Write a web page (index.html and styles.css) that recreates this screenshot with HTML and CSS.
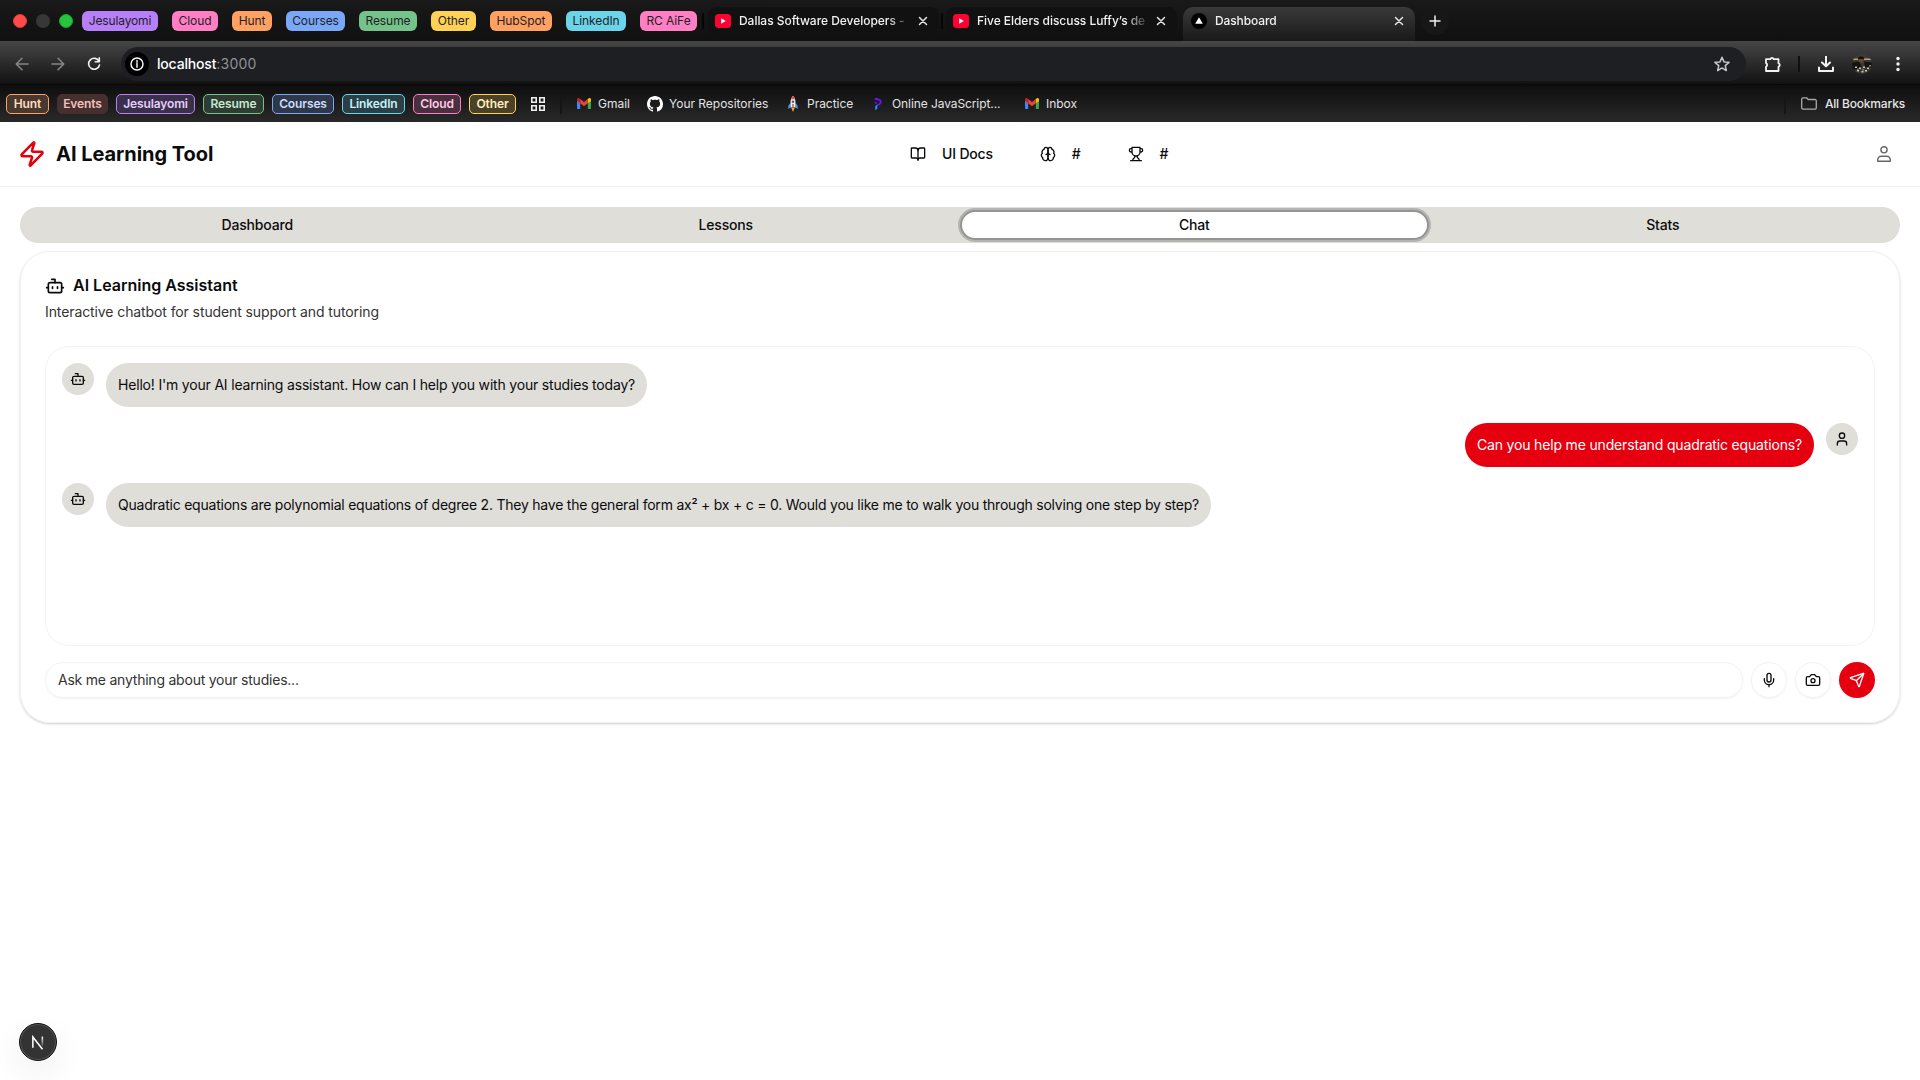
FILE: index.html
```html
<!DOCTYPE html>
<html lang="en">
<head>
<meta charset="utf-8">
<title>Dashboard</title>
<link rel="stylesheet" href="styles.css">
</head>
<body>
<svg class="sprite" aria-hidden="true">
  <symbol id="bot" viewBox="0 0 24 24"><path d="M12 8V4H8"/><rect width="16" height="12" x="4" y="8" rx="2"/><path d="M2 14h2M20 14h2M15 13v2M9 13v2"/></symbol>
  <symbol id="user" viewBox="0 0 24 24"><path d="M19 21v-2a4 4 0 0 0-4-4H9a4 4 0 0 0-4 4v2"/><circle cx="12" cy="7" r="4"/></symbol>
  <symbol id="close" viewBox="0 0 10 10"><path d="M1.500 1.500l7 7M8.500 1.500l-7 7"/></symbol>
  <symbol id="youtube" viewBox="0 0 16 14"><rect width="16" height="14" rx="3.500" fill="#ff0033"/><path d="M6.200 4.300v5.400L10.800 7z" fill="#fff"/></symbol>
  <symbol id="gmail" viewBox="0 0 14 11"><path d="M0 1.500V10a1 1 0 0 0 1 1h2.200V4z" fill="#4285f4"/><path d="M14 1.500V10a1 1 0 0 1-1 1h-2.200V4z" fill="#34a853"/><path d="M10.800 1.300v4L14 2.900V1.500C14 .1 12.500-.4 11.500.5z" fill="#fbbc04"/><path d="M3.200 1.300v4L0 2.900V1.500C0 .1 1.500-.4 2.500.5z" fill="#c5221f"/><path d="M3.200 1.100L7 4l3.800-2.900v4.200L7 8.200 3.200 5.300z" fill="#ea4335"/></symbol>
</svg>

<div class="browser">
  <div class="tabstrip">
    <div class="lights"><i class="light red"></i><i class="light dim"></i><i class="light green"></i></div>
    <div class="groups">
      <span class="group purple jesulayomi">Jesulayomi</span>
      <span class="group pink cloud">Cloud</span>
      <span class="group orange hunt">Hunt</span>
      <span class="group blue courses">Courses</span>
      <span class="group green resume">Resume</span>
      <span class="group yellow other">Other</span>
      <span class="group orange hubspot">HubSpot</span>
      <span class="group cyan linkedin">LinkedIn</span>
      <span class="group pink rcaife">RC AiFe</span>
    </div>
    <i class="tab-sep"></i>
    <div class="tab">
      <svg class="yt"><use href="#youtube"/></svg>
      <span class="tab-title">Dallas Software Developers -</span>
      <svg class="close"><use href="#close"/></svg>
    </div>
    <i class="tab-sep"></i>
    <div class="tab">
      <svg class="yt"><use href="#youtube"/></svg>
      <span class="tab-title">Five Elders discuss Luffy’s de</span>
      <svg class="close"><use href="#close"/></svg>
    </div>
    <div class="tab active">
      <svg class="favicon" viewBox="0 0 16 16"><circle cx="8" cy="8" r="8" fill="#000"/><path d="M8 4.200l3.800 6.600H4.200z" fill="#fff"/></svg>
      <span class="tab-title">Dashboard</span>
      <svg class="close"><use href="#close"/></svg>
    </div>
    <div class="newtab"><svg viewBox="0 0 12 12"><path d="M6 1v10M1 6h10"/></svg></div>
  </div>

  <div class="toolbar">
    <svg class="nav-ic faded" viewBox="0 0 14 14"><path d="M13 7H1.500M7 1.300L1.300 7 7 12.700"/></svg>
    <svg class="nav-ic faded" viewBox="0 0 14 14"><path d="M1 7h11.500M7 1.300L12.700 7 7 12.700"/></svg>
    <svg class="nav-ic" viewBox="0 0 14 14"><path d="M12 4.200A5.500 5.500 0 1 0 12.500 8M12.300.8v4H8.300"/></svg>
    <div class="omnibox">
      <span class="info"><svg viewBox="0 0 14 14"><circle cx="7" cy="7" r="6"/><path d="M7 6.300v4M7 3.500v1.500"/></svg></span>
      <span class="host">localhost</span><span class="port">:3000</span>
      <svg class="star" viewBox="0 0 24 24"><path d="M12 3l2.700 6.200 6.700.6-5.100 4.400 1.500 6.600L12 17.300l-5.800 3.500 1.500-6.600L2.600 9.800l6.700-.6z"/></svg>
    </div>
    <svg class="puzzle" viewBox="0 0 18 18"><path d="M2 4.200h4.400a1.700 1.700 0 0 1 3.300 0h4.800v4.200a1.700 1.700 0 0 1 0 3.300v4.300H2v-4.300a2 2 0 0 0 0-3.600z"/></svg>
    <i class="bar-sep"></i>
    <svg class="download" viewBox="0 0 16 16"><path d="M8 0v10M4 6.500L8 10.300 12 6.500M1 11.500V15h14v-3.500"/></svg>
    <svg class="avatar" viewBox="0 0 20 20"><clipPath id="round"><circle cx="10" cy="10" r="10"/></clipPath><g clip-path="url(#round)"><rect width="20" height="20" fill="#3d3933"/><path d="M0 4.500h6v1.500H0zM12 4.500h8v1.500h-8z" fill="#b3a078"/><path d="M0 8.500l7-1 3 5-5 3H0zM12 7.500l8 1v5h-7z" fill="#151413"/><circle cx="9" cy="6" r="2.600" fill="#6a4331"/><path d="M6 3.800q3-3 6 0v1.200H6z" fill="#17120f"/><path d="M3 12.500h2v1.500H3zM7 13.500h2v1.500H7zM11 12.500h2v1.500h-2zM15 13.500h2v1.500h-2zM5 16h2v1.500H5zM9.500 17h2v1.500h-2zM13 16h2v1.500h-2z" fill="#c2c2bd"/><path d="M5 14.500h1.500v1.500H5zM10 15h2v1.500h-2zM17 11h2v1.500h-2z" fill="#887d6b"/></g></svg>
    <svg class="dots" viewBox="0 0 4 16"><circle cx="2" cy="2.500" r="1.700"/><circle cx="2" cy="8" r="1.700"/><circle cx="2" cy="13.500" r="1.700"/></svg>
  </div>

  <div class="bookmarks">
    <div class="saved-groups">
      <span class="saved s-orange b-hunt">Hunt</span>
      <span class="saved s-red b-events">Events</span>
      <span class="saved s-purple b-jesulayomi">Jesulayomi</span>
      <span class="saved s-green b-resume">Resume</span>
      <span class="saved s-blue b-courses">Courses</span>
      <span class="saved s-cyan b-linkedin">LinkedIn</span>
      <span class="saved s-pink b-cloud">Cloud</span>
      <span class="saved s-yellow b-other">Other</span>
    </div>
    <svg class="grid-ic" viewBox="0 0 14 14"><path d="M.8.8h4.400v4.400H.8zM8.800.8h4.400v4.400H8.800zM.8 8.800h4.400v4.400H.8zM8.800 8.800h4.400v4.400H8.800z"/></svg>
    <i class="bm-sep"></i>
    <div class="links">
      <span class="link gmail"><svg class="mail"><use href="#gmail"/></svg>Gmail</span>
      <span class="link repos"><svg class="github" viewBox="0 0 16 16"><path d="M8 0C3.580 0 0 3.580 0 8c0 3.540 2.290 6.530 5.470 7.590.4.070.55-.17.55-.38 0-.19-.01-.82-.01-1.490-2.010.37-2.530-.49-2.690-.94-.09-.23-.48-.94-.82-1.130-.28-.15-.68-.52-.01-.53.63-.01 1.080.58 1.230.82.72 1.210 1.870.87 2.330.66.07-.52.28-.87.51-1.070-1.780-.2-3.640-.89-3.640-3.950 0-.87.31-1.590.82-2.150-.08-.2-.36-1.020.08-2.120 0 0 .67-.21 2.200.82.64-.18 1.320-.27 2-.27s1.360.09 2 .27c1.530-1.040 2.200-.82 2.200-.82.44 1.100.16 1.920.08 2.120.51.56.82 1.270.82 2.150 0 3.070-1.870 3.750-3.650 3.950.29.25.54.73.54 1.480 0 1.070-.01 1.930-.01 2.200 0 .21.15.46.55.38A8.010 8.010 0 0 0 16 8c0-4.420-3.580-8-8-8z"/></svg>Your Repositories</span>
      <span class="link practice"><svg class="rocket" viewBox="0 0 10 16"><path d="M2.500 7L.3 9.800V13l2.700-1.800zM7.500 7l2.200 2.800V13L7 11.200z" fill="#3f9be0"/><path d="M5 0C2.800 2 2 5 2.800 11.500h4.400C8 5 7.200 2 5 0z" fill="#eceff1"/><path d="M5 0C4 .9 3.300 2 3 3.200h4C6.700 2 6 .9 5 0z" fill="#e8533f"/><circle cx="5" cy="5.700" r="1.300" fill="#356a99"/><path d="M4.300 8h1.400v3.500H4.300z" fill="#d84437"/><path d="M3.300 12h3.400L5 16z" fill="#ff9d26"/></svg>Practice</span>
      <span class="link online"><svg class="programiz" viewBox="0 0 8 12"><path d="M1.500 1C5 1 7.200 2.600 6.700 4.600 6.200 6.400 4.500 6.900 2.500 7.800" fill="none" stroke="#6a16f5" stroke-width="1.900"/><path d="M.8 3.600l1.900.7v1.700L.8 5.300z" fill="#6a16f5"/><path d="M1.200 8.200l2-1.200V11l-2 1z" fill="#1598ff"/></svg>Online JavaScript...</span>
      <span class="link inbox"><svg class="mail"><use href="#gmail"/></svg>Inbox</span>
    </div>
    <i class="bm-sep"></i>
    <span class="all"><svg viewBox="0 0 16 13"><path d="M.7 2.200A1.400 1.400 0 0 1 2.100.8h3.500l1.600 1.700h6.700a1.400 1.400 0 0 1 1.400 1.400v6.900a1.400 1.400 0 0 1-1.400 1.400H2.100a1.400 1.400 0 0 1-1.400-1.400z"/></svg>All Bookmarks</span>
  </div>
</div>

<header class="header">
  <div class="brand">
    <svg class="zap" viewBox="0 0 24 24"><path d="M4 14a1 1 0 0 1-.78-1.630l9.900-10.200a.5.5 0 0 1 .86.460l-1.920 6.020A1 1 0 0 0 13 10h7a1 1 0 0 1 .78 1.630l-9.900 10.200a.5.5 0 0 1-.86-.460l1.920-6.020A1 1 0 0 0 11 14z"/></svg>
    <h1>AI Learning Tool</h1>
  </div>
  <nav class="nav">
    <a><svg class="icon" viewBox="0 0 24 24"><path d="M12 7v14"/><path d="M3 18a1 1 0 0 1-1-1V4a1 1 0 0 1 1-1h5a4 4 0 0 1 4 4 4 4 0 0 1 4-4h5a1 1 0 0 1 1 1v13a1 1 0 0 1-1 1h-6a3 3 0 0 0-3 3 3 3 0 0 0-3-3z"/></svg><span>UI Docs</span></a>
    <a><svg class="icon" viewBox="0 0 24 24"><path d="M12 5a3 3 0 1 0-5.997.125 4 4 0 0 0-2.526 5.770 4 4 0 0 0 .556 6.588A4 4 0 1 0 12 18Z"/><path d="M12 5a3 3 0 1 1 5.997.125 4 4 0 0 1 2.526 5.770 4 4 0 0 1-.556 6.588A4 4 0 1 1 12 18Z"/><path d="M15 13a4.500 4.500 0 0 1-3-4 4.500 4.500 0 0 1-3 4"/></svg><span>#</span></a>
    <a><svg class="icon" viewBox="0 0 24 24"><path d="M6 9H4.500a2.500 2.500 0 0 1 0-5H6M18 9h1.500a2.500 2.500 0 0 0 0-5H18M4 22h16M10 14.660V17c0 .55-.47.98-.97 1.210C7.850 18.750 7 20.240 7 22M14 14.660V17c0 .55.47.98.97 1.210C16.150 18.750 17 20.240 17 22M18 2H6v7a6 6 0 0 0 12 0V2Z"/></svg><span>#</span></a>
  </nav>
  <svg class="account" viewBox="0 0 14 16"><circle cx="7" cy="3.800" r="3.100"/><path d="M.7 15.300v-1.500A3.600 3.600 0 0 1 4.300 10.200h5.400a3.600 3.600 0 0 1 3.600 3.600v1.500z"/></svg>
</header>

<main class="main">
  <div class="tabs">
    <button>Dashboard</button>
    <button>Lessons</button>
    <button class="selected">Chat</button>
    <button>Stats</button>
  </div>

  <section class="card">
    <h2><svg class="icon"><use href="#bot"/></svg><span>AI Learning Assistant</span></h2>
    <p class="sub">Interactive chatbot for student support and tutoring</p>

    <div class="log">
      <div class="msg"><span class="face"><svg class="icon"><use href="#bot"/></svg></span><p class="bubble">Hello! I'm your AI learning assistant. How can I help you with your studies today?</p></div>
      <div class="msg mine"><p class="bubble">Can you help me understand quadratic equations?</p><span class="face"><svg class="icon"><use href="#user"/></svg></span></div>
      <div class="msg"><span class="face"><svg class="icon"><use href="#bot"/></svg></span><p class="bubble long">Quadratic equations are polynomial equations of degree 2. They have the general form ax² + bx + c = 0. Would you like me to walk you through solving one step by step?</p></div>
    </div>

    <div class="compose">
      <div class="field">Ask me anything about your studies...</div>
      <button class="round"><svg class="icon" viewBox="0 0 24 24"><path d="M12 19v3M19 10v2a7 7 0 0 1-14 0v-2"/><rect x="9" y="2" width="6" height="13" rx="3"/></svg></button>
      <button class="round"><svg class="icon" viewBox="0 0 24 24"><path d="M14.500 4h-5L7 7H4a2 2 0 0 0-2 2v9a2 2 0 0 0 2 2h16a2 2 0 0 0 2-2V9a2 2 0 0 0-2-2h-3z"/><circle cx="12" cy="13" r="3"/></svg></button>
      <button class="round send"><svg class="icon" viewBox="0 0 24 24"><path d="M14.536 21.686a.5.5 0 0 0 .937-.024l6.500-19a.496.496 0 0 0-.635-.635l-19 6.500a.5.5 0 0 0-.024.937l7.930 3.180a2 2 0 0 1 1.112 1.110z"/><path d="m21.854 2.147-10.940 10.939"/></svg></button>
    </div>
  </section>
</main>

<div class="devtools"><svg viewBox="0 0 40 40"><defs><linearGradient id="fade" x1="0" y1="0" x2="0" y2="1"><stop offset="0" stop-color="#fff"/><stop offset="1" stop-color="#fff" stop-opacity=".15"/></linearGradient></defs><path d="M14.300 26.500V14.500L25 28" fill="none" stroke="#fff" stroke-width="1.700"/><rect x="24" y="14" width="1.700" height="10.500" fill="url(#fade)"/></svg></div>
</body>
</html>
```
FILE: styles.css
```css
* { box-sizing: border-box; }
body { margin: 0; height: 1080px; overflow: hidden; background: #fff; color: #0b0b0c; font-family: Inter, "Liberation Sans", sans-serif; font-size: 14px; letter-spacing: -0.19px; }
h1, h2, p { margin: 0; }
svg { display: block; flex: none; fill: none; stroke-linecap: round; stroke-linejoin: round; }
button { padding: 0; border: 0; background: none; color: inherit; font: inherit; letter-spacing: inherit; }
.sprite { position: absolute; width: 0; height: 0; }
.icon { width: 16px; height: 16px; stroke: currentColor; stroke-width: 2; }

/* Browser window */
.browser { height: 122px; font-size: 12px; letter-spacing: -0.08px; color: #e6e6e6; background: #161616; }
.browser i { flex: none; }

.tabstrip { display: flex; align-items: center; height: 41px; padding-left: 13px; background: linear-gradient(#191919, #101010); }
.lights { display: flex; gap: 9px; width: 69px; }
.light { width: 14px; height: 14px; border-radius: 50%; }
.light.red { background: #fe4c4b; border: 1px solid #e5383b; }
.light.dim { background: #373737; }
.light.green { background: #27c440; border: 1px solid #17a82c; }
.groups { display: flex; gap: 14px; }
.group { height: 20px; line-height: 20px; border-radius: 6px; text-align: center; color: #1f1f24; white-space: nowrap; }
.purple { background: #b77ff9; }
.pink { background: #ff7ec4; }
.orange { background: #ffa163; }
.blue { background: #7ba7f7; }
.group.green { background: #75c38a; }
.yellow { background: #ffd155; }
.cyan { background: #6bd4e8; }
.jesulayomi { width: 76px; letter-spacing: -0.15px; }
.cloud { width: 46px; }
.hunt { width: 40px; }
.courses { width: 59px; }
.resume { width: 58px; }
.other { width: 45px; }
.hubspot { width: 62px; }
.linkedin { width: 60px; }
.rcaife { width: 57px; }
.tab-sep { width: 2px; height: 16px; margin: 0 4px 0 5px; background: #060606; border-radius: 1px; }
.tab { display: flex; align-items: center; width: 231px; height: 28px; padding-left: 7px; border-radius: 9px; background: #111; color: #f1f1f1; }
.tab + .tab-sep { margin: 0 3px 0 2px; }
.yt { width: 16px; height: 14px; }
.tab-title { flex: none; width: 169px; margin: 0 10px 0 8px; line-height: 16px; white-space: nowrap; font-weight: 500; letter-spacing: -0.04px; mask-image: linear-gradient(90deg, #000 148px, transparent 173px); }
.close { width: 10px; height: 10px; stroke: #e6e6e6; stroke-width: 1.5; }
.tab.active { align-self: flex-end; width: 232px; height: 34px; margin-left: 6px; padding: 0 0 6px 8px; border-radius: 10px 10px 0 0; background: linear-gradient(#3a3a3a, #191919); }
.favicon { width: 16px; height: 16px; }
.tab.active .tab-title { letter-spacing: -0.12px; }
.newtab { display: grid; place-items: center; width: 28px; height: 28px; margin-left: 6px; border-radius: 50%; background: #171717; }
.newtab svg { width: 12px; height: 12px; stroke: #eee; stroke-width: 1.5; }

.toolbar { display: flex; align-items: center; height: 44px; padding: 2px 20px 0 15px; border-bottom: 1px solid #080808; background: linear-gradient(#464646, #121212); }
.nav-ic { width: 14px; height: 14px; margin-right: 22px; stroke: #f2f2f2; stroke-width: 1.6; }
.faded { stroke: #858585; }
.nav-ic + .omnibox { margin-left: -2px; }
.omnibox { display: flex; align-items: center; width: 1625px; height: 34px; padding: 0 15px 0 4px; border-radius: 17px; background: #1e1f23; font-size: 14px; }
.info { display: grid; place-items: center; width: 24px; height: 24px; border-radius: 50%; background: #000; }
.info svg { width: 14px; height: 14px; stroke: #fff; stroke-width: 1.4; }
.host { margin-left: 8px; color: #fff; font-weight: 500; letter-spacing: -0.18px; }
.port { color: #909194; letter-spacing: 0.25px; }
.star { width: 18px; height: 18px; margin-left: auto; stroke: #c7c7c7; stroke-width: 2; }
.puzzle { width: 18px; height: 18px; margin-left: 18px; stroke: #f2f2f2; stroke-width: 1.8; }
.bar-sep { width: 2px; height: 16px; margin: 0 18px 0 16px; background: #101010; }
.download { width: 16px; height: 16px; stroke: #f2f2f2; stroke-width: 2; }
.avatar { width: 20px; height: 20px; margin-left: 18px; }
.dots { width: 4px; height: 16px; margin-left: 24px; fill: #f2f2f2; }

.bookmarks { display: flex; align-items: center; height: 37px; padding: 0 15px 0 6px; background: linear-gradient(#0e0e0e, #292929); }
.saved-groups { display: flex; gap: 8px; }
.saved { height: 20px; line-height: 18px; border: 1px solid; border-radius: 5px; text-align: center; font-weight: 600; letter-spacing: -0.12px; white-space: nowrap; }
.s-orange { border-color: #ffa163; background: #49382d; color: #ffdcc3; }
.s-red { border-color: #46302f; background: #46302f; color: #f2c1bd; }
.s-purple { border-color: #b77ff9; background: #3b3049; color: #e4cdff; }
.s-green { border-color: #75c38a; background: #2e3c33; color: #c7e9d0; }
.s-blue { border-color: #7ba7f7; background: #2f3849; color: #c9dcff; }
.s-cyan { border-color: #6bd4e8; background: #2b4046; color: #c5f2fa; }
.s-pink { border-color: #ff7ec4; background: #4a2f3f; color: #ffc9e6; }
.s-yellow { border-color: #ffd155; background: #4a4129; color: #ffedbc; }
.b-hunt { width: 43px; }
.b-events { width: 51px; }
.b-jesulayomi { width: 79px; }
.b-resume { width: 61px; }
.b-courses { width: 62px; }
.b-linkedin { width: 63px; }
.b-cloud { width: 48px; }
.b-other { width: 47px; }
.grid-ic { width: 14px; height: 14px; margin-left: 15px; stroke: #eee; stroke-width: 1.6; stroke-linejoin: miter; }
.bm-sep { width: 2px; height: 16px; margin: 4px 15px 0; background: #151515; }
.links { display: flex; align-items: center; flex: 1; color: #e3e3e3; letter-spacing: -0.02px; }
.link { display: flex; align-items: center; white-space: nowrap; }
.gmail { width: 70px; gap: 7px; }
.repos { width: 141px; gap: 6px; }
.practice { width: 86px; gap: 9px; }
.online { width: 151px; gap: 10px; letter-spacing: -0.09px; }
.inbox { gap: 7px; }
.mail { width: 14px; height: 11px; }
.github { width: 16px; height: 16px; fill: #fff; }
.rocket { width: 10px; height: 16px; }
.programiz { width: 8px; height: 12px; }
.all { display: flex; align-items: center; gap: 8px; font-weight: 500; letter-spacing: -0.17px; }
.all svg { width: 16px; height: 13px; stroke: #a9a9a9; stroke-width: 1.3; }

/* App header */
.header { display: flex; align-items: center; justify-content: space-between; height: 65px; padding: 0 29px 0 18px; border-bottom: 1px solid #f2f2f2; }
.brand { display: flex; align-items: center; gap: 10px; }
.zap { width: 28px; height: 28px; stroke: #e6000f; stroke-width: 2.2; }
h1 { font-size: 20px; font-weight: 700; line-height: 28px; letter-spacing: -0.04px; }
.nav { display: flex; gap: 47px; margin-right: 12px; font-weight: 500; }
.nav a { display: flex; align-items: center; gap: 16px; }
.nav span { padding-bottom: 1px; }
.account { width: 14px; height: 16px; stroke: #666; stroke-width: 1.4; }

/* Section tabs */
.main { padding: 20px 20px 0; }
.tabs { display: grid; grid-template-columns: repeat(4, 1fr); height: 36px; padding: 3px; border-radius: 18px; background: #dfded9; font-weight: 500; }
.tabs button { display: grid; place-items: center; padding-bottom: 1px; border-radius: 16px; }
.tabs .selected { margin: 0 -0.5px; border: 2px solid #949494; background: #fff; box-shadow: 0 0 0 2px #b4b4b1; }

/* Chat card */
.card { height: 472px; margin-top: 8px; padding: 24px; border: 1px solid #f0f0f0; border-radius: 30px; box-shadow: 0 1px 3px rgba(0, 0, 0, .1), 0 1px 2px rgba(0, 0, 0, .1); }
h2 { display: flex; align-items: center; gap: 8px; height: 20px; font-size: 16px; font-weight: 600; letter-spacing: 0; }
h2 .icon { width: 20px; height: 20px; }
h2 span { padding-bottom: 2px; }
.sub { margin-top: 6px; line-height: 20px; color: #333; letter-spacing: -0.1px; }
.log { display: flex; flex-direction: column; gap: 16px; height: 300px; margin-top: 24px; padding: 16px; border: 1px solid #f3f3f3; border-radius: 24px; }
.msg { display: flex; gap: 12px; height: 44px; }
.mine { justify-content: flex-end; }
.face { display: grid; place-items: center; flex: none; width: 32px; height: 32px; border-radius: 50%; background: #dfded9; }
.bubble { padding: 12px; line-height: 20px; border-radius: 22px; background: #dfded9; white-space: nowrap; letter-spacing: -0.185px; }
.long { letter-spacing: -0.227px; }
.mine .bubble { background: #e6000f; color: #fff; letter-spacing: -0.165px; }
.compose { display: flex; gap: 8px; margin-top: 16px; }
.field { flex: 1; height: 36px; padding: 0 12px; line-height: 34px; border: 1px solid #f2f2f2; border-radius: 18px; box-shadow: 0 1px 2px rgba(0, 0, 0, .05); color: #333; letter-spacing: -0.225px; }
.round { display: grid; place-items: center; width: 36px; height: 36px; border: 1px solid #f2f2f2; border-radius: 50%; box-shadow: 0 1px 2px rgba(0, 0, 0, .05); }
.send { border: 0; background: #e6000f; color: #fff; }

/* Floating badge over the page */
.devtools { position: fixed; left: 19px; bottom: 19px; width: 38px; height: 38px; border: 1px solid #111; border-radius: 50%; background: #333; box-shadow: inset 0 0 0 1px #555, 0 12px 32px rgba(0, 0, 0, .07); }
.devtools svg { width: 36px; height: 36px; stroke-linecap: butt; stroke-linejoin: miter; }
```
